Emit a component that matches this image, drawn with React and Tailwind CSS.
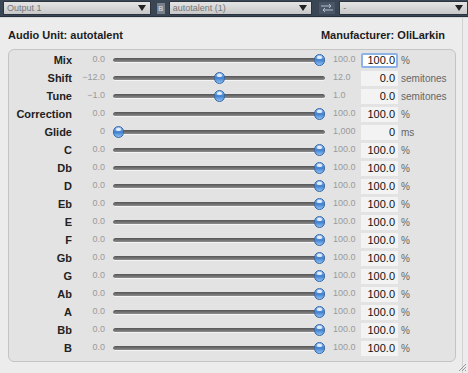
import React from "react";

const rows = [
  { name: "Mix", min: "0.0", max: "100.0", pos: 1, value: "100.0", unit: "%", focus: true },
  { name: "Shift", min: "\u221212.0", max: "12.0", pos: 0.5, value: "0.0", unit: "semitones" },
  { name: "Tune", min: "\u22121.0", max: "1.0", pos: 0.5, value: "0.0", unit: "semitones" },
  { name: "Correction", min: "0.0", max: "100.0", pos: 1, value: "100.0", unit: "%" },
  { name: "Glide", min: "0", max: "1,000", pos: 0, value: "0", unit: "ms" },
  ...["C", "Db", "D", "Eb", "E", "F", "Gb", "G", "Ab", "A", "Bb", "B"].map((n) => ({
    name: n,
    min: "0.0",
    max: "100.0",
    pos: 1,
    value: "100.0",
    unit: "%",
  })),
];

function Caret() {
  return (
    <svg width="8" height="6" viewBox="0 0 8 6" className="shrink-0">
      <path d="M0 0 L8 0 L4 6 Z" fill="#222" />
    </svg>
  );
}

function PopUp({ label, width }) {
  return (
    <div
      className="h-[14px] flex items-center justify-between pl-[3px] pr-[4px] bg-gradient-to-b from-[#e4e4e4] to-[#c8c8c8] border border-[#2a333e] rounded-[1px]"
      style={{ width }}
    >
      <span className="text-[9px] leading-none text-[#777]">{label}</span>
      <Caret />
    </div>
  );
}

function Slider({ pos }) {
  return (
    <div className="relative w-[212px] h-[12px] flex items-center">
      <div className="w-full h-[5px] rounded-full bg-gradient-to-b from-[#555] to-[#8c8c8c] border-b border-[#f4f4f4]" />
      <div
        className="absolute top-[0px] w-[11px] h-[12px] rounded-full bg-gradient-to-b from-[#9cc6f2] via-[#3f7fcf] to-[#8fc0f0] border border-[#3566a8] flex justify-center"
        style={{ left: pos * 201 }}
      >
        <div className="w-[5px] h-[3px] mt-[1px] rounded-full bg-white/80" />
      </div>
    </div>
  );
}

export default function App() {
  return (
    <div
      className="w-[468px] h-[373px] bg-[#ececec] overflow-hidden"
      style={{ fontFamily: '"Liberation Sans", Arial, sans-serif' }}
    >
      {/* toolbar */}
      <div className="h-[17px] bg-[#3b4655] flex items-center pl-[3px] gap-[4px] border-b border-[#26303b]">
        <PopUp label="Output 1" width={148} />
        <div className="w-[8px] h-[11px] ml-[2px] bg-[#77808b] text-[7px] leading-[11px] text-center text-[#c9ced4] font-bold">
          B
        </div>
        <PopUp label="autotalent (1)" width={144} />
        <svg width="16" height="12" viewBox="0 0 16 12" className="ml-[3px]">
          <rect x="0" y="0" width="16" height="12" fill="#4a5665" />
          <path d="M2 4 H12 M10 2 L12 4 L10 6" stroke="#b8c0c9" strokeWidth="1" fill="none" />
          <path d="M14 8 H4 M6 6 L4 8 L6 10" stroke="#b8c0c9" strokeWidth="1" fill="none" />
        </svg>
        <PopUp label="-" width={129} />
      </div>

      {/* body */}
      <div className="h-[356px] w-full border-t border-[#d6d6d6] relative flex">
        <div className="w-[463px] h-full pt-[10px] border-r border-[#d2d2d2]">
          <div className="flex justify-between pl-[8px] pr-[17px] text-[11px] font-bold text-[#1c1c1c] leading-[14px]">
            <span>Audio Unit: autotalent</span>
            <span>Manufacturer: OliLarkin</span>
          </div>

          <div className="ml-[8px] mt-[7px] w-[448px] h-[313px] rounded-[6px] border border-[#c4c4c4] bg-[#e3e3e3] pt-[1px]">
            {rows.map((r) => (
              <div key={r.name} className="h-[18px] flex items-center">
                <div className="w-[63px] text-right text-[11px] font-bold text-[#222]">{r.name}</div>
                <div className="w-[33px] text-right text-[9px] text-[#9a9a9a]">{r.min}</div>
                <div className="ml-[8px]">
                  <Slider pos={r.pos} />
                </div>
                <div className="ml-[8px] w-[27px] text-[9px] text-[#9a9a9a]">{r.max}</div>
                <div
                  className={
                    r.focus
                      ? "ml-[1px] w-[37px] h-[15px] bg-white border-2 border-[#8cb2e6] rounded-[2px] text-right pr-[1px] text-[11px] leading-[11px] text-[#111]"
                      : "ml-[1px] w-[37px] h-[15px] bg-[#f3f3f3] text-right pr-[3px] text-[11px] leading-[15px] text-[#111]"
                  }
                >
                  {r.value}
                </div>
                <div className="ml-[3px] text-[10px] text-[#666]">{r.unit}</div>
              </div>
            ))}
          </div>
        </div>

        {/* resize grip */}
        <svg width="10" height="10" viewBox="0 0 10 10" className="absolute right-[1px] bottom-[1px]">
          <path d="M9 2 L2 9 M9 5 L5 9 M9 8 L8 9" stroke="#9a9a9a" strokeWidth="1" />
        </svg>
      </div>
    </div>
  );
}
